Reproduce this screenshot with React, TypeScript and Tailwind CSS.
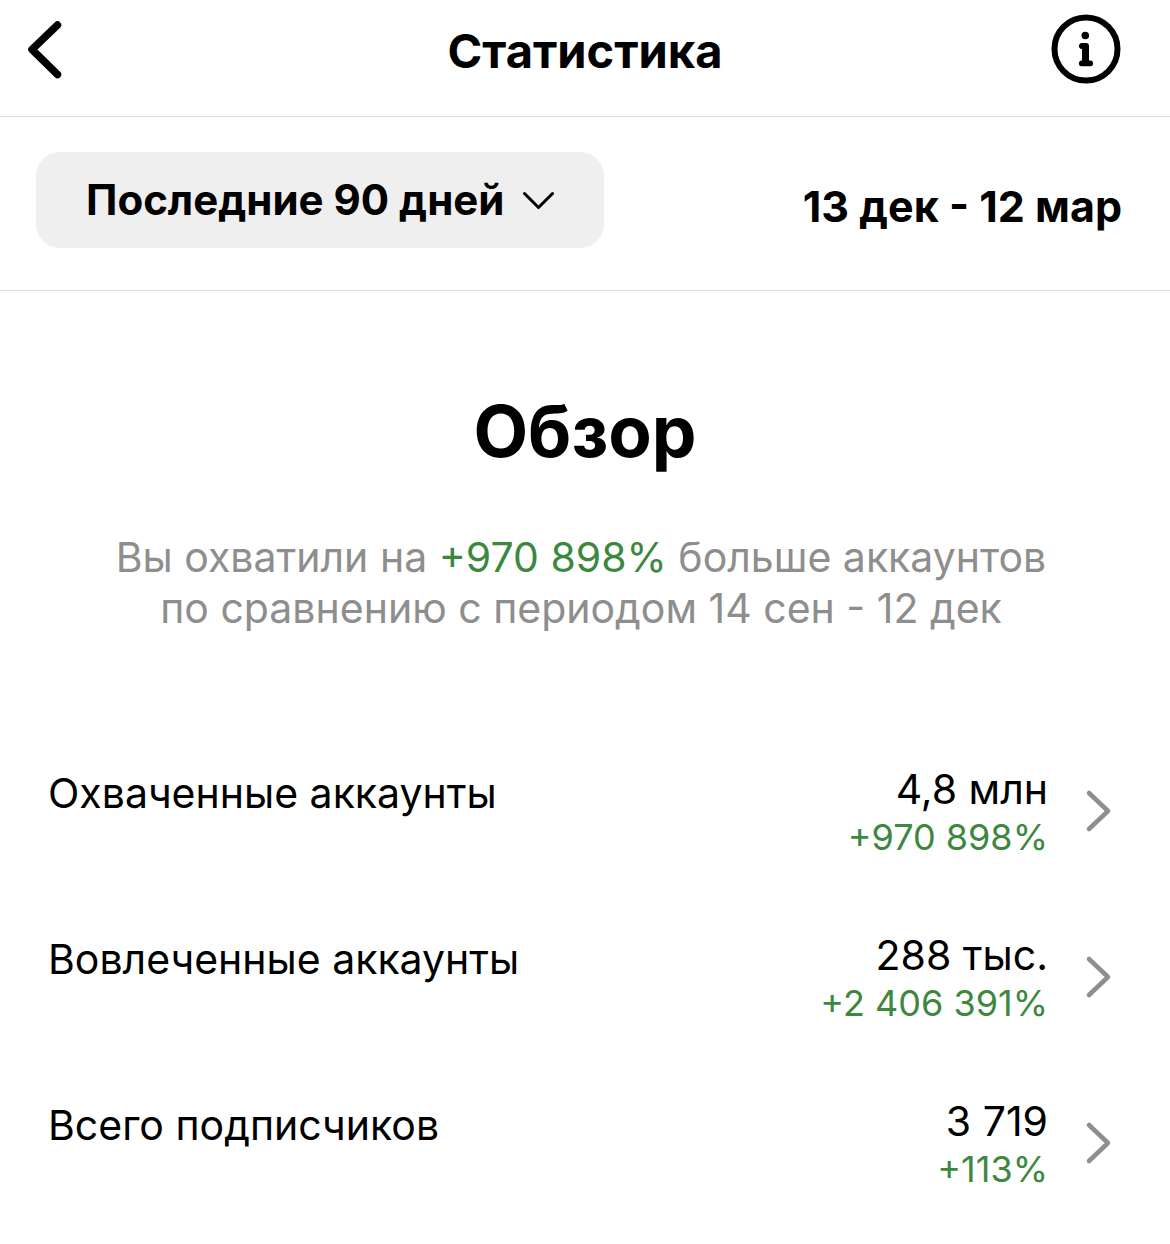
interface Metric {
  label: string;
  value: string;
  change: string;
}

const metrics: Metric[] = [
  { label: "Охваченные аккаунты", value: "4,8 млн", change: "+970 898%" },
  { label: "Вовлеченные аккаунты", value: "288 тыс.", change: "+2 406 391%" },
  { label: "Всего подписчиков", value: "3 719", change: "+113%" },
];

const MetricRow = ({ label, value, change }: Metric) => {
  return (
    <li>
      <button type="button" className="flex w-full items-start pr-[58px] pl-12 text-left">
        <span className="flex-1 pt-1 text-[41px] leading-[52px]">{label}</span>
        <span className="text-right">
          <span className="block text-[41px] leading-[52px]">{value}</span>
          <span className="block text-[36px] leading-[44px] text-[#3b883e]">{change}</span>
        </span>
        <svg className="mt-6 ml-[34px] h-12 w-[30px]" viewBox="0 0 30 48" fill="none" aria-hidden="true">
          <path d="M7 6L26 24L7 42" stroke="#8e8e8e" strokeWidth="4.5" strokeLinecap="round" strokeLinejoin="round" />
        </svg>
      </button>
    </li>
  );
};

const App = () => {
  return (
    <div className="min-h-screen bg-white font-['Inter','Liberation_Sans',sans-serif] text-black">
      <header className="flex h-[117px] items-start border-b border-[#dbdbdb] pr-12 pl-6">
        <div className="flex w-24 pt-5">
          <button type="button" aria-label="Назад">
            <svg className="h-[60px] w-10" viewBox="0 0 40 60" fill="none" aria-hidden="true">
              <path d="M33.5 5L8 29.5L33.5 54.5" stroke="currentColor" strokeWidth="7.5" strokeLinecap="round" strokeLinejoin="round" />
            </svg>
          </button>
        </div>
        <h1 className="flex-1 pt-[21px] text-center text-[47px] leading-[60px] font-bold">Статистика</h1>
        <div className="flex w-[72px] pt-[13px]">
          <button type="button" aria-label="Информация">
            <svg className="h-[72px] w-[72px]" viewBox="0 0 72 72" fill="none" aria-hidden="true">
              <circle cx="36" cy="36" r="31.5" stroke="currentColor" strokeWidth="6" />
              <circle cx="35.3" cy="22.5" r="3.8" fill="currentColor" />
              <path
                d="M31.8 30H36C37.9 30 39 31.1 39 33V47.4H40.6C44 47.4 44 53.2 40.6 53.2H31.6C28 53.2 28 47.4 31.6 47.4H32V36H31.8C28 36 28 30 31.8 30Z"
                fill="currentColor"
              />
            </svg>
          </button>
        </div>
      </header>

      <section className="flex h-[174px] items-start justify-between border-b border-[#dbdbdb] pt-[35px] pr-12 pl-9">
        <button type="button" className="flex h-24 items-center gap-[18px] rounded-3xl bg-[#efefef] px-[50px] text-[42px] leading-[52px] font-bold">
          Последние 90 дней
          <svg className="h-8 w-8" viewBox="0 0 32 32" fill="none" aria-hidden="true">
            <path d="M2.5 9.5L16.5 23.5L30.5 9.5" stroke="currentColor" strokeWidth="3" strokeLinecap="round" strokeLinejoin="round" />
          </svg>
        </button>
        <p className="mt-7 text-[43px] leading-[52px] font-bold">13 дек - 12 мар</p>
      </section>

      <main>
        <h2 className="mt-24 text-center text-[71px] leading-[88px] font-bold">Обзор</h2>
        <p className="mt-[57px] pr-2 text-center text-[41px] leading-[51px] text-[#8e8e8e]">
          Вы охватили на <span className="text-[#3b883e]">+970 898%</span> больше аккаунтов
          <br />
          по сравнению с периодом 14 сен - 12 дек
        </p>
        <ul className="mt-[129px] flex flex-col gap-[70px]">
          {metrics.map((metric) => (
            <MetricRow key={metric.label} {...metric} />
          ))}
        </ul>
      </main>
    </div>
  );
};

export default App;
